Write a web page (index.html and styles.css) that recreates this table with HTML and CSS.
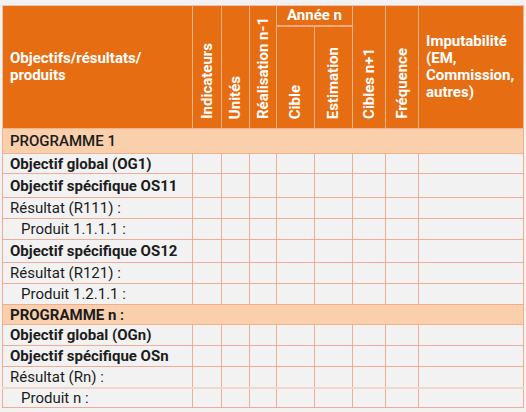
FILE: index.html
```html
<!DOCTYPE html>
<html>
<head>
<meta charset="utf-8">
<title>Cadre logique</title>
<link rel="stylesheet" href="styles.css">
</head>
<body>

<table class="grid">
  <colgroup>
    <col class="c-obj">
    <col class="c-ind">
    <col class="c-uni">
    <col class="c-rea">
    <col class="c-cib">
    <col class="c-est">
    <col class="c-cnp">
    <col class="c-fre">
    <col class="c-imp">
  </colgroup>
  <thead>
    <tr class="head-top">
      <th rowspan="2" class="label">Objectifs/résultats/<br>produits</th>
      <th rowspan="2" class="vert"><span>Indicateurs</span></th>
      <th rowspan="2" class="vert"><span>Unités</span></th>
      <th rowspan="2" class="vert"><span>Réalisation n-1</span></th>
      <th colspan="2" class="annee">Année n</th>
      <th rowspan="2" class="vert"><span>Cibles n+1</span></th>
      <th rowspan="2" class="vert"><span>Fréquence</span></th>
      <th rowspan="2" class="label">Imputabilité<br>(EM,<br>Commission,<br>autres)</th>
    </tr>
    <tr class="head-sub">
      <th class="vert"><span>Cible</span></th>
      <th class="vert"><span>Estimation</span></th>
    </tr>
  </thead>
  <tbody>
    <tr class="prog tall"><td colspan="9">PROGRAMME 1</td></tr>
    <tr class="short"><td class="strong">Objectif global (OG1)</td><td></td><td></td><td></td><td></td><td></td><td></td><td></td><td></td></tr>
    <tr class="big"><td class="strong">Objectif spécifique OS11</td><td></td><td></td><td></td><td></td><td></td><td></td><td></td><td></td></tr>
    <tr><td>Résultat (R111) :</td><td></td><td></td><td></td><td></td><td></td><td></td><td></td><td></td></tr>
    <tr><td class="sub">Produit 1.1.1.1 :</td><td></td><td></td><td></td><td></td><td></td><td></td><td></td><td></td></tr>
    <tr class="mid"><td class="strong">Objectif spécifique OS12</td><td></td><td></td><td></td><td></td><td></td><td></td><td></td><td></td></tr>
    <tr><td>Résultat (R121) :</td><td></td><td></td><td></td><td></td><td></td><td></td><td></td><td></td></tr>
    <tr><td class="sub">Produit 1.2.1.1 :</td><td></td><td></td><td></td><td></td><td></td><td></td><td></td><td></td></tr>
    <tr class="prog short"><td colspan="9"><b>PROGRAMME n</b> :</td></tr>
    <tr><td class="strong">Objectif global (OGn)</td><td></td><td></td><td></td><td></td><td></td><td></td><td></td><td></td></tr>
    <tr><td class="strong">Objectif spécifique OSn</td><td></td><td></td><td></td><td></td><td></td><td></td><td></td><td></td></tr>
    <tr><td>Résultat (Rn) :</td><td></td><td></td><td></td><td></td><td></td><td></td><td></td><td></td></tr>
    <tr class="last short"><td class="sub">Produit n :</td><td></td><td></td><td></td><td></td><td></td><td></td><td></td><td></td></tr>
  </tbody>
</table>

</body>
</html>
```

FILE: styles.css
```css
* {box-sizing: border-box}
body {
  margin: 0;
  padding: 5px 0 0 2px;
  background-color: #f2f2f2;
  font-family: Roboto, "Liberation Sans", sans-serif;
  color: #1c1c1c;
}
.grid {
  border-collapse: collapse;
  table-layout: fixed;
  width: 521px;
  font-size: 15px;
}
.c-obj {width: 190px}
.c-ind {width: 29px}
.c-uni {width: 28px}
.c-rea {width: 27px}
.c-cib {width: 38px}
.c-est {width: 38px}
.c-cnp {width: 33px}
.c-fre {width: 33px}
.c-imp {width: 105px}

/* header */
.grid th {
  background-color: #e76d12;
  color: #fff;
  font-weight: bold;
  border: 1px solid #f3b48c;
  border-top: none;
  padding: 0;
  line-height: 17px;
}
.grid thead tr:first-child th {border-top: 1px solid #f0c4ac}
.grid th:first-child {border-left: 1px solid #f0c4ac}
.grid th.label {
  text-align: left;
  vertical-align: middle;
  padding-left: 7px;
}
.head-top {height: 20px}
.head-sub {height: 103px}
.grid th.annee {
  height: 20px;
  text-align: center;
  vertical-align: middle;
  border-bottom: 2px solid #f3a882;
}
.grid th.vert {
  vertical-align: bottom;
  padding-bottom: 5px;
}
.vert span {
  display: inline-block;
  writing-mode: vertical-rl;
  transform: rotate(180deg);
  white-space: nowrap;
}

/* body */
.grid td {
  border: 1px solid #f0ac94;
  height: 21px;
  padding: 0 0 0 7px;
  white-space: nowrap;
  line-height: 16px;
}
.grid td.strong {font-weight: bold}
.grid td.sub {padding-left: 18px}
.grid tr.short td {height: 20px}
.grid tr.mid td {height: 23px}
.grid tr.big td {height: 24px}
.grid tr.tall td {height: 25px}
.grid tr.prog td {
  background-color: #facfac;
  font-weight: 500;
  border-color: #f3b08e;
}
.grid tr.prog td b {font-weight: bold}
.grid tr.last td {border-top: 2px solid #f0d6cb}
```
